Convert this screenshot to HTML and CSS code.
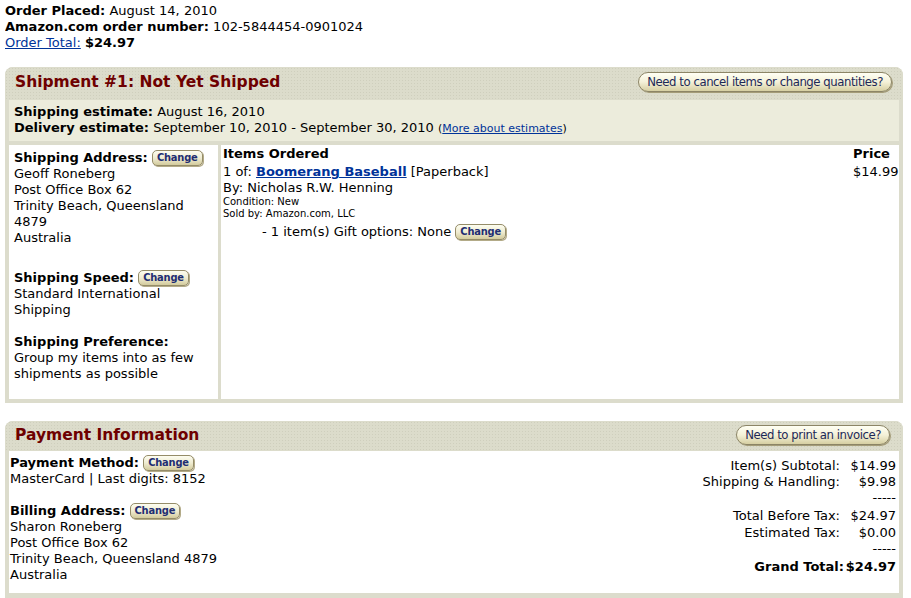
FILE: index.html
```html
<html>
<head>
<title>Order Details</title>
<link rel="stylesheet" href="styles.css">
</head>
<body>

<div class="order-info">
<b>Order Placed:</b> August 14, 2010<br>
<b>Amazon.com order number:</b> 102-5844454-0901024<br>
<a href="#">Order Total:</a> <b>$24.97</b>
</div>

<div class="panel shipment">
  <div class="panel-head">
    <h2>Shipment #1: Not Yet Shipped</h2>
    <span class="pill">Need to cancel items or change quantities?</span>
  </div>
  <div class="estimates">
    <b>Shipping estimate:</b> August 16, 2010<br>
    <b>Delivery estimate:</b> September 10, 2010 - September 30, 2010 <span class="small">(<a href="#">More about estimates</a>)</span>
  </div>
  <div class="cells">
    <div class="cell side">
      <div class="sect addr">
        <b>Shipping Address:</b> <span class="btn">Change</span><br>
        Geoff Roneberg<br>
        Post Office Box 62<br>
        Trinity Beach, Queensland<br>
        4879<br>
        Australia
      </div>
      <div class="sect speed">
        <b>Shipping Speed:</b> <span class="btn">Change</span><br>
        Standard International<br>
        Shipping
      </div>
      <div class="sect">
        <b>Shipping Preference:</b><br>
        Group my items into as few<br>
        shipments as possible
      </div>
    </div>
    <div class="cell items">
      <div class="item-col">
        <div class="col-title">Items Ordered</div>
        <div class="item-line">1 of: <a href="#" class="title">Boomerang Baseball</a> [Paperback]</div>
        <div>By: Nicholas R.W. Henning</div>
        <div class="tiny">Condition: New</div>
        <div class="tiny">Sold by: Amazon.com, LLC</div>
        <div class="gift">- 1 item(s) Gift options: None <span class="btn">Change</span></div>
      </div>
      <div class="price-col">
        <div class="col-title">Price</div>
        <div class="item-line">$14.99</div>
      </div>
    </div>
  </div>
</div>

<div class="panel payment">
  <div class="panel-head">
    <h2>Payment Information</h2>
    <span class="pill">Need to print an invoice?</span>
  </div>
  <div class="pay-body">
    <div class="pay-left">
      <div class="sect method">
        <b>Payment Method:</b> <span class="btn">Change</span><br>
        MasterCard | Last digits: 8152
      </div>
      <div class="sect">
        <b>Billing Address:</b> <span class="btn">Change</span><br>
        Sharon Roneberg<br>
        Post Office Box 62<br>
        Trinity Beach, Queensland 4879<br>
        Australia
      </div>
    </div>
    <div class="totals">
      <span>Item(s) Subtotal:</span><span>$14.99</span>
      <span>Shipping &amp; Handling:</span><span>$9.98</span>
      <span></span><span>-----</span>
      <span>Total Before Tax:</span><span>$24.97</span>
      <span>Estimated Tax:</span><span>$0.00</span>
      <span></span><span>-----</span>
      <b class="grand">Grand Total:</b><b class="grand">$24.97</b>
    </div>
  </div>
</div>

</body>
</html>
```

FILE: styles.css
```css
body {margin:3px 5px; font-family:"DejaVu Sans", Verdana, sans-serif; font-size:13px; line-height:16px; color:#000; background-color:#fff}
a {color:#003399}
b {font-weight:bold}

.order-info {margin-bottom:16px}

.panel {width:898px; background-color:#dcdccc; border-radius:8px 8px 0 0; padding:0 4px 4px; box-sizing:border-box}
.panel-head {display:flex; justify-content:space-between; align-items:center; margin:0 -4px; padding:0 11px 3px 10px; height:30px;
  background-color:#dcdccb; border-radius:8px 8px 0 0;
  background-image:radial-gradient(circle, #cfcfbd 0.6px, transparent 0.9px); background-size:3px 3px}
.panel-head h2 {margin:0; font-size:15.5px; line-height:20px; color:#6e0000; font-weight:bold}

.pill {display:inline-block; height:18px; line-height:18px; padding:0 8px; border:1px solid #8c8566; border-radius:10px;
  font-family:"DejaVu Sans Condensed", sans-serif; font-size:13px; letter-spacing:-0.45px; color:#1d2857;
  background:linear-gradient(#fffff4, #f4f1d8 50%, #d6cfa2); box-shadow:1px 1px 0 #a49c78}

.btn {display:inline-block; height:14px; line-height:14px; padding:0 4px; border:1px solid #958c68; border-radius:5px; vertical-align:1px;
  font-family:"DejaVu Sans Condensed", sans-serif; font-size:11px; letter-spacing:-0.2px; font-weight:bold; color:#1f2e72;
  background:linear-gradient(#fdfdf0, #efecd2 50%, #d3cb9d); box-shadow:1px 1px 0 #b3ab88}

.estimates {background-color:#ececdc; padding:4px 5px 4px; margin-bottom:4px}
.small {font-size:11px}

.cells {display:flex; gap:3px; height:254px}
.cell {background-color:#fff}
.side {width:204px; padding:5px 0 0 5px}
.addr {margin-bottom:24px}
.speed {margin-bottom:16px}

.items {flex:1; display:flex; justify-content:space-between; padding:1px 2px 0 2px}
.col-title {font-weight:bold}
.item-line {margin-top:2px}
.title {font-weight:bold}
.tiny {font-size:10px; line-height:12px}
.gift {margin-top:4px; padding-left:39px}
.price-col {width:44px}

.payment {margin-top:18px; padding-bottom:5px}
.payment .panel-head {height:28px; padding-right:13px; padding-bottom:2px}
.pay-body {display:flex; justify-content:space-between; background-color:#fff; padding:4px 3px 9px 1px; height:129px}
.method {margin-bottom:16px}
.totals {display:grid; grid-template-columns:auto 52px; grid-template-rows:16px 16px 18px 17px 16px 18px 17px; justify-items:end; align-content:start; column-gap:0; margin-top:3px}
.totals span:nth-child(odd) {padding-right:4px}
```
